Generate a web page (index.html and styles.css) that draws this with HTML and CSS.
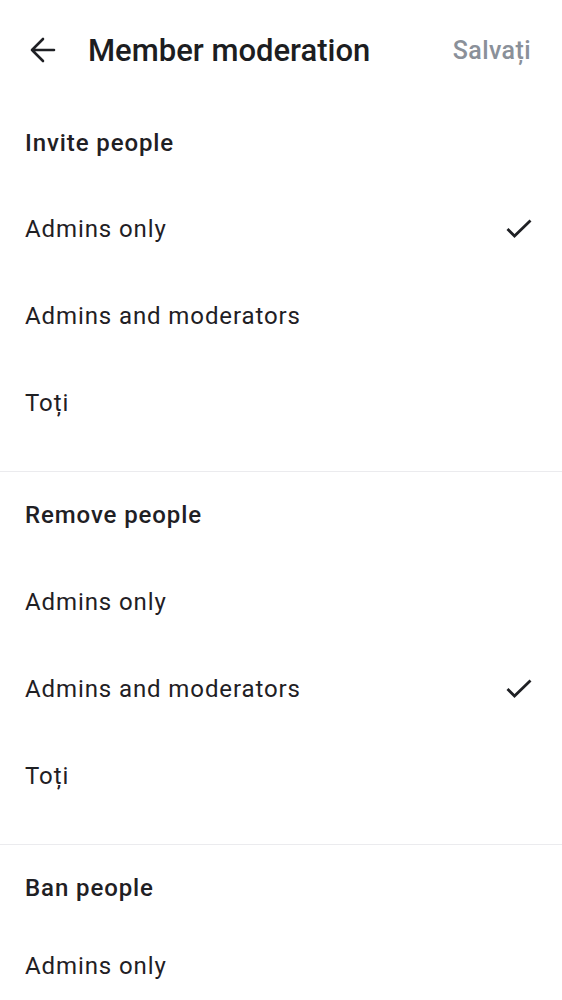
FILE: index.html
```html
<!DOCTYPE html>
<html>
<head>
<meta charset="utf-8">
<link rel="stylesheet" href="styles.css">
</head>
<body>
<header class="topbar">
  <button class="back" aria-label="Back">
    <svg width="26" height="26" viewBox="0 0 26 26"><path d="M2 13H24M13 2L2 13L13 24" fill="none" stroke="#1f2024" stroke-width="2.6" stroke-linecap="round" stroke-linejoin="round"/></svg>
  </button>
  <h1 class="title">Member moderation</h1>
  <span class="save">Salvați</span>
</header>
<main>
  <section class="group">
    <h2 class="group-title">Invite people</h2>
    <div class="option"><span>Admins only</span><svg class="check" width="26" height="20" viewBox="0 0 26 20"><path d="M1.5 10L8.5 17L24.5 1.5" fill="none" stroke="#1f2024" stroke-width="2.8"/></svg></div>
    <div class="option"><span>Admins and moderators</span></div>
    <div class="option"><span>Toți</span></div>
  </section>
  <section class="group">
    <h2 class="group-title">Remove people</h2>
    <div class="option"><span>Admins only</span></div>
    <div class="option"><span>Admins and moderators</span><svg class="check" width="26" height="20" viewBox="0 0 26 20"><path d="M1.5 10L8.5 17L24.5 1.5" fill="none" stroke="#1f2024" stroke-width="2.8"/></svg></div>
    <div class="option"><span>Toți</span></div>
  </section>
  <section class="group group--last">
    <h2 class="group-title group-title--compact">Ban people</h2>
    <div class="option"><span>Admins only</span></div>
  </section>
</main>
</body>
</html>
```
FILE: styles.css
```css
html, body {
  margin: 0;
  padding: 0;
  background: #ffffff;
}
body {
  font-family: Roboto, "Noto Sans", sans-serif;
  color: #1f2024;
  width: 562px;
  height: 1000px;
  overflow: hidden;
}
.topbar {
  height: 100px;
  display: flex;
  align-items: center;
  padding: 0 31px 0 30px;
}
.back {
  border: 0;
  background: none;
  padding: 0;
  margin: 0;
  width: 26px;
  height: 26px;
  display: flex;
  align-items: center;
  justify-content: center;
}
.title {
  margin: 0 0 0 32px;
  font-size: 31px;
  font-weight: 500;
  flex: 1;
  color: #1c1d21;
}
.save {
  font-size: 25px;
  font-weight: 500;
  letter-spacing: 0.4px;
  color: #8a9099;
}
.group {
  border-bottom: 1px solid #ebebee;
  padding-bottom: 25px;
}
.group--last {
  border-bottom: 0;
  padding-bottom: 0;
}
.group-title {
  box-sizing: border-box;
  margin: 0;
  height: 85px;
  display: flex;
  align-items: center;
  padding: 0 25px;
  font-size: 24px;
  font-weight: 500;
  letter-spacing: 0.9px;
  color: #1f2024;
}
.group-title--compact {
  height: 77px;
  padding-top: 9px;
}
.option {
  height: 87px;
  display: flex;
  align-items: center;
  justify-content: space-between;
  padding: 0 30px 0 25px;
  font-size: 24px;
  letter-spacing: 0.9px;
  color: #1f2024;
}
.group + .group .group-title:not(.group-title--compact) {
  height: 86px;
}
```
